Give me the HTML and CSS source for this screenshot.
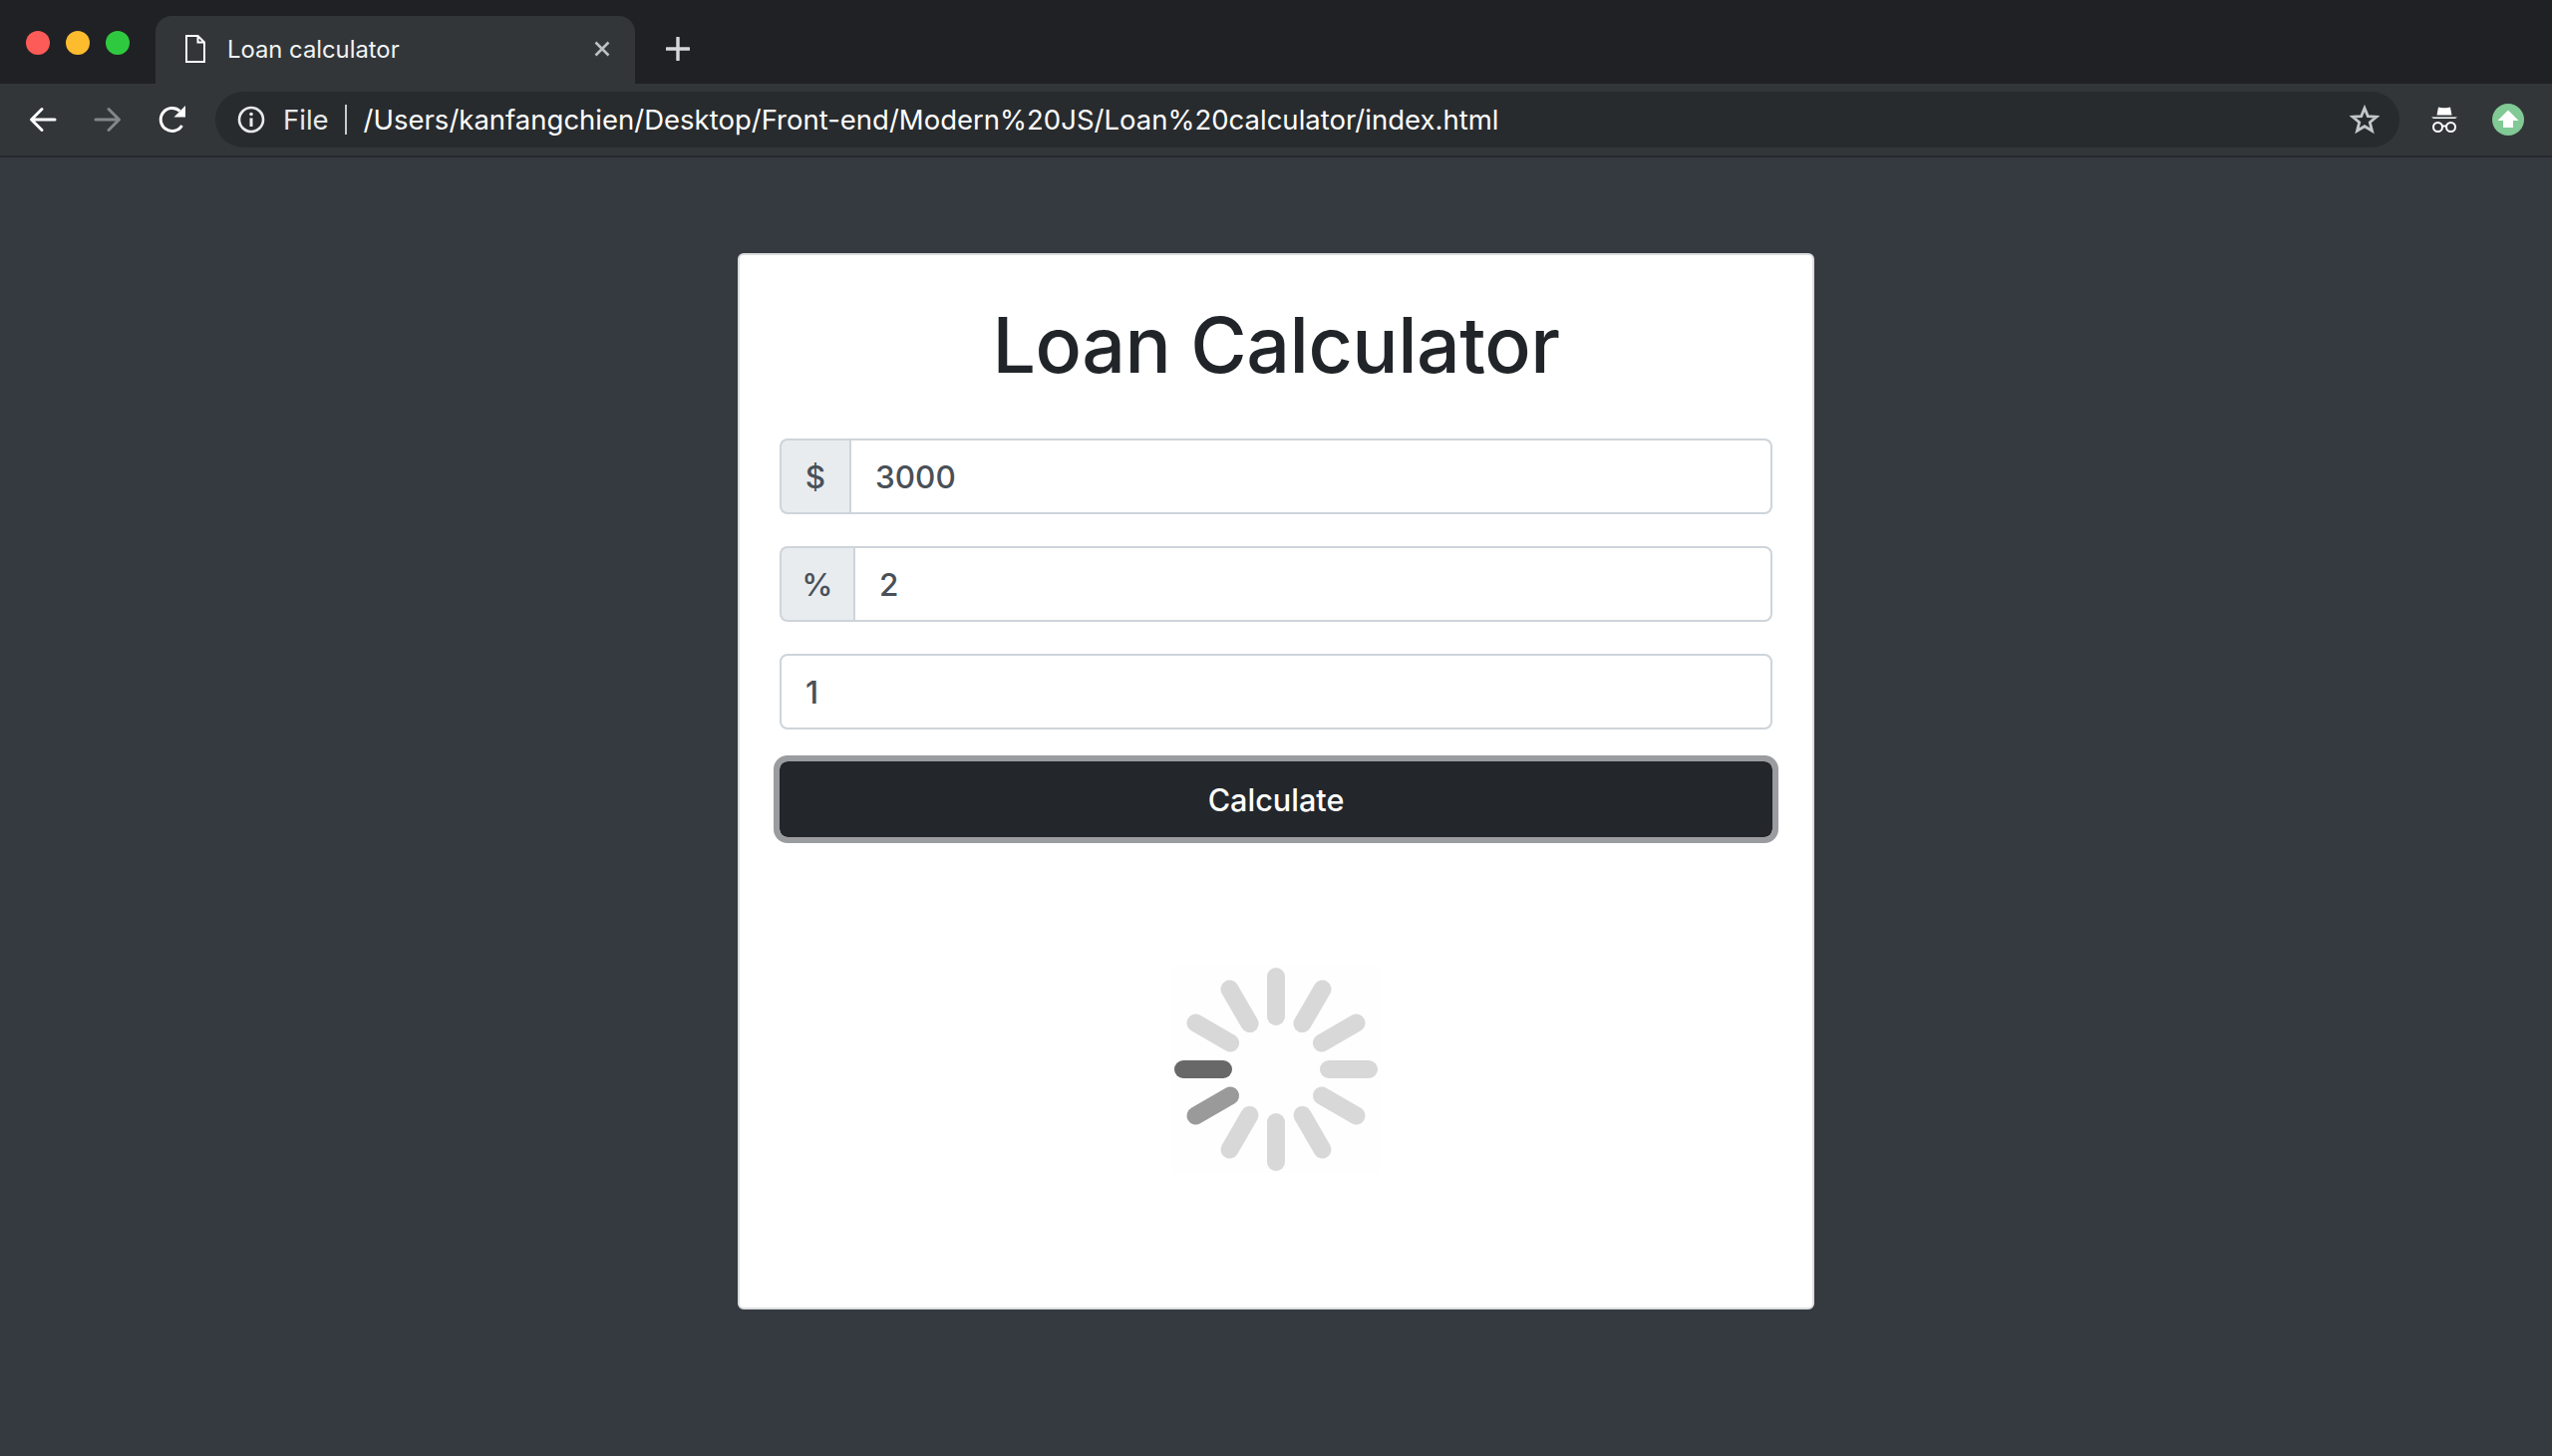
FILE: index.html
```html
<!DOCTYPE html>
<html lang="en">
<head>
<meta charset="utf-8">
<title>Loan calculator</title>
<link rel="stylesheet" href="styles.css">
</head>
<body>
<header class="browser">
  <div class="tabstrip">
    <div class="lights"><span class="light red"></span><span class="light yellow"></span><span class="light green"></span></div>
    <div class="tab">
      <svg class="tab-icon" width="20" height="28" viewBox="0 0 20 28"><path d="M1 1H12.500L19 7.500V27H1Z M12.500 1V7.500H19" fill="none" stroke="#fff" stroke-width="2"/></svg>
      <span class="tab-title">Loan calculator</span>
      <svg class="tab-close" width="18" height="18" viewBox="0 0 18 18"><path d="M2.500 2.500L15.500 15.500M15.500 2.500L2.500 15.500" stroke="#bdc1c6" stroke-width="2.600" fill="none"/></svg>
    </div>
    <svg class="new-tab" width="24" height="24" viewBox="0 0 24 24"><path d="M12 1V23M1 12H23" stroke="#d5d7d9" stroke-width="3.400" stroke-linecap="round" fill="none"/></svg>
  </div>
  <div class="toolbar">
    <svg class="nav back" width="28" height="28" viewBox="0 0 28 28"><path d="M26 14H3M13 3.500L2.500 14L13 24.500" stroke="#fff" stroke-width="3" fill="none" stroke-linecap="round" stroke-linejoin="round"/></svg>
    <svg class="nav forward" width="28" height="28" viewBox="0 0 28 28"><path d="M2 14H25M15 3.500L25.500 14L15 24.500" stroke="#84878a" stroke-width="3" fill="none" stroke-linecap="round" stroke-linejoin="round"/></svg>
    <svg class="nav reload" width="28" height="30" viewBox="0 0 28 30"><path d="M23.500 21A11.500 11.500 0 1 1 21.500 6.500" stroke="#fff" stroke-width="3" fill="none"/><path d="M27 1V12.500H15.500Z" fill="#fff"/></svg>
    <div class="omnibox">
      <svg class="info" width="28" height="28" viewBox="0 0 28 28"><circle cx="14" cy="14" r="12" stroke="#e8eaed" stroke-width="2.600" fill="none"/><path d="M14 12.500V21" stroke="#e8eaed" stroke-width="3"/><circle cx="14" cy="8.500" r="1.800" fill="#e8eaed"/></svg>
      <span class="scheme">File</span>
      <span class="sep"></span>
      <span class="url">/Users/kanfangchien/Desktop/Front-end/Modern%20JS/Loan%20calculator/index.html</span>
      <svg class="star" width="30" height="30" viewBox="0 0 30 30"><path d="M15 3.500L18.300 11.600L27 12.200L20.300 17.800L22.500 26.300L15 21.700L7.500 26.300L9.700 17.800L3 12.200L11.700 11.600Z" stroke="#c4c7ca" stroke-width="2.800" fill="none"/></svg>
    </div>
    <svg class="incognito" width="28" height="28" viewBox="0 0 28 28"><path d="M8 1.500C10 2.500 18 2.500 20 1.500L21.500 9.500H6.500Z" fill="#fff"/><path d="M1 11.500H27L25 13H3Z" fill="#fff"/><circle cx="7.500" cy="21.500" r="4.500" stroke="#fff" stroke-width="2" fill="none"/><circle cx="20.500" cy="21.500" r="4.500" stroke="#fff" stroke-width="2" fill="none"/><path d="M12 20.500H16" stroke="#fff" stroke-width="2"/></svg>
    <svg class="update" width="32" height="32" viewBox="0 0 32 32"><circle cx="16" cy="16" r="16" fill="#81c995"/><path d="M16 6.500L26.500 17H21V24H11V17H5.500Z" fill="#fff"/></svg>
  </div>
</header>
<main class="page">
  <section class="card">
    <h1 class="title">Loan Calculator</h1>
    <form class="form">
      <div class="group">
        <span class="addon addon-dollar">$</span>
        <input class="field" type="text" value="3000" aria-label="Amount">
      </div>
      <div class="group">
        <span class="addon addon-percent">%</span>
        <input class="field" type="text" value="2" aria-label="Interest">
      </div>
      <div class="group">
        <input class="field field-solo" type="text" value="1" aria-label="Years">
      </div>
      <button class="calc" type="button">Calculate</button>
    </form>
    <div class="loader">
      <svg width="208" height="208" viewBox="0 0 208 208">
        <rect width="208" height="208" fill="#fefefe"/>
        <g stroke="#d8d8d8" stroke-width="18" stroke-linecap="round">
          <line x1="104" y1="11" x2="104" y2="51"/>
          <line x1="150.500" y1="23.500" x2="130.500" y2="58.100"/>
          <line x1="184.500" y1="57.500" x2="149.900" y2="77.500"/>
          <line x1="197" y1="104" x2="157" y2="104"/>
          <line x1="184.500" y1="150.500" x2="149.900" y2="130.500"/>
          <line x1="150.500" y1="184.500" x2="130.500" y2="149.900"/>
          <line x1="104" y1="197" x2="104" y2="157"/>
          <line x1="57.500" y1="184.500" x2="77.500" y2="149.900"/>
          <line x1="23.500" y1="57.500" x2="58.100" y2="77.500"/>
          <line x1="57.500" y1="23.500" x2="77.500" y2="58.100"/>
          <line class="bar-mid" x1="23.500" y1="150.500" x2="58.100" y2="130.500"/>
          <line class="bar-dark" x1="11" y1="104" x2="51" y2="104"/>
        </g>
      </svg>
    </div>
  </section>
</main>
</body>
</html>
```
FILE: styles.css
```css
* { box-sizing: border-box; }
html, body { margin: 0; height: 100%; }
body {
  display: flex;
  flex-direction: column;
  height: 1461px;
  overflow: hidden;
  background: #343a40;
  font-family: Inter, "Liberation Sans", sans-serif;
}
.browser { flex: none; }
.tabstrip {
  height: 84px;
  background: #202124;
  display: flex;
  align-items: flex-end;
}
.lights {
  display: flex;
  gap: 16px;
  width: 156px;
  padding-left: 26px;
  align-self: flex-start;
  margin-top: 31px;
}
.light { width: 24px; height: 24px; border-radius: 50%; }
.red { background: #fc5b57; }
.yellow { background: #fdbb2e; }
.green { background: #2fc93f; }
.tab {
  width: 481px;
  height: 68px;
  background: #323639;
  border-radius: 16px 16px 0 0;
  display: flex;
  align-items: center;
  padding: 0 24px 0 30px;
  color: #f1f3f4;
}
.tab-icon { flex: none; margin-top: -2px; }
.tab-title { margin-left: 22px; font-size: 23.800px; flex: 1; margin-top: -2px; }
.tab-close { flex: none; margin-top: -2px; }
.new-tab { margin: 0 0 23px 31px; }
.toolbar {
  height: 74px;
  background: #323639;
  border-bottom: 2px solid #27292c;
  display: flex;
  align-items: center;
  padding-left: 29px;
}
.nav { flex: none; }
.forward { margin-left: 37px; }
.reload { margin-left: 37px; }
.omnibox {
  width: 2191px;
  height: 56px;
  margin-left: 29px;
  background: #282b2e;
  border-radius: 28px;
  display: flex;
  align-items: center;
  padding: 0 20px 0 22px;
  color: #fff;
  font-size: 27.500px;
}
.info { flex: none; }
.scheme { margin-left: 18px; color: #e8eaed; }
.sep { width: 2px; height: 30px; background: #c8cacc; margin: 0 17px 0 16px; }
.url { flex: 1; white-space: nowrap; }
.star { flex: none; }
.incognito { flex: none; margin-left: 31px; }
.update { flex: none; margin-left: 34px; }
.page {
  flex: 1;
  display: flex;
  justify-content: center;
  align-items: flex-start;
  padding-top: 96px;
}
.card {
  width: 1080px;
  height: 1060px;
  background: #fff;
  border: 2px solid #dcdddf;
  border-radius: 6px;
  padding: 40px;
}
.title {
  margin: 2px 0 46px;
  text-align: center;
  font-size: 77px;
  line-height: 96px;
  font-weight: 450;
  letter-spacing: -0.500px;
  color: #212529;
}
.form { display: flex; flex-direction: column; }
.group {
  display: flex;
  height: 76px;
  margin-bottom: 32px;
  font-size: 31.500px;
  font-weight: 450;
  color: #495057;
}
.addon {
  flex: none;
  display: flex;
  align-items: center;
  justify-content: center;
  background: #e9ecef;
  border: 2px solid #ced4da;
  border-right: 0;
  border-radius: 8px 0 0 8px;
}
.addon-dollar { width: 70px; }
.addon-percent { width: 74px; }
.field {
  flex: 1;
  min-width: 0;
  border: 2px solid #ced4da;
  border-radius: 0 8px 8px 0;
  padding: 0 24px;
  font: inherit;
  color: inherit;
  background: #fff;
}
.field-solo { border-radius: 8px; }
.calc {
  height: 76px;
  background: #23272b;
  color: #fff;
  border: 0;
  border-radius: 8px;
  outline: 6px solid #9a9c9f;
  font: inherit;
  font-size: 30.600px;
  font-weight: 450;
}
.loader { display: flex; justify-content: center; margin-top: 129px; }
.bar-mid { stroke: #9a9a9a; }
.bar-dark { stroke: #686868; }
```
